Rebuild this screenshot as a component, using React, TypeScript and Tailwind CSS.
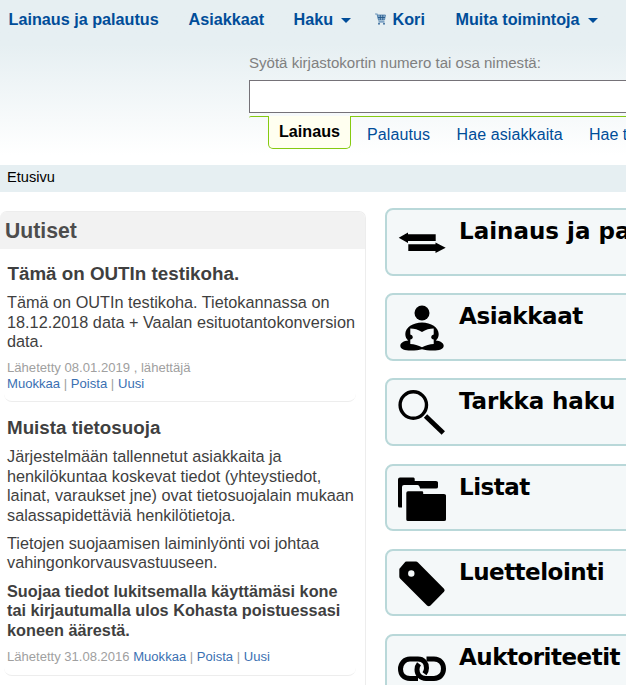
import type { ReactNode } from "react";

const sans = "font-['Liberation_Sans',Arial,sans-serif]";

function Caret() {
  return (
    <svg className="ml-2 mt-[3px] h-[5px] w-[10px]" viewBox="0 0 10 5">
      <path d="M0 0h10L5 5z" fill="#004d99" />
    </svg>
  );
}

function CartIcon() {
  return (
    <svg className="-mt-px mr-[7px] h-3 w-[11px]" viewBox="0 0 11 12">
      <path d="M0 1h2l2 6.500" fill="none" stroke="#6f97bb" strokeWidth="1.200" />
      <path d="M2.500 2h8L9.500 7H3.500z" fill="#8fb0cd" stroke="#4b7dab" strokeWidth=".8" />
      <path d="M3 4.500h7M5.300 2v5M7.800 2v5" stroke="#24598b" strokeWidth=".9" />
      <path d="M3.500 8.800h6" stroke="#7fa3c4" strokeWidth="1.800" />
      <circle cx="4" cy="10.700" r="1" fill="#40719f" />
      <circle cx="9" cy="10.700" r="1" fill="#40719f" />
    </svg>
  );
}

const icons: ReactNode[] = [
  <g key="a">
    <path d="M.7 18.700L10 13.400v1.900h27.700V22H10v2z" />
    <path d="M47.700 28.700L37.500 34v-2H10.300v-6.700h27.200v-1.900z" />
  </g>,
  <g key="p">
    <circle cx="24" cy="9" r="7.500" />
    <path d="M24 18.500c9 0 16.700 5 16.700 11.500 0 3-1 5-3 6.500 4.500.3 8 2.300 8 5.300 0 3.500-4.500 4.700-10.500 4.700-4.500 0-8.500-.4-11.200-1.200-2.700.8-6.700 1.200-11.200 1.200-6 0-10.500-1.200-10.500-4.700 0-3 3.500-5 8-5.300-2-1.500-3-3.500-3-6.500C7.300 23.500 15 18.500 24 18.500z" />
    <path className="fill-[#f4f8f9]" d="M12.300 24.500c4 0 8 1 11.700 3.500 3.700-2.500 7.700-3.500 11.700-3.500v6c-1.700.5-2.500 1.600-2.500 2.700s1 2.200 2.500 2.300V40c-4 .3-8 1.200-11.700 3.200-3.700-2-7.700-2.900-11.700-3.200v-4.500c1.500-.1 2.500-1.200 2.500-2.300s-.8-2.200-2.500-2.700z" />
  </g>,
  <g key="s" fill="none" stroke="#000">
    <circle cx="15.300" cy="16" r="13.200" strokeWidth="3.400" />
    <path d="M27.500 27L45.300 44" strokeWidth="4.800" />
  </g>,
  <g key="f">
    <path d="M0 4.500q0-2 2-2h13.500q1.200 0 1.200 1.500v2H38q2 0 2 1.500v4.500q0 1.500-2 1.500H22q-.5-3.500-2.500-3.500H6q-2 0-2 2v20.500H1.500Q0 32.500 0 31z" />
    <path d="M8.300 18q0-1.700 1.700-1.700h14q1.200 0 1.200 1.200V19H46q2 0 2 1.500v24q0 1.500-2 1.500H10q-1.700 0-1.700-1.500z" />
  </g>,
  <path key="t" fillRule="evenodd" d="M8.500 1.500h9.500q1 0 2 1L46 28.800q1.400 1.500 0 3L32.500 45.500q-1.800 1.500-3.500 0L2.300 18.800q-1-1-1-2.300V9.600q0-1 1-1.800l4.200-5q.8-1.200 2-1.300zM13.300 10.300a3.200 3.200 0 1 0 0 6.400 3.200 3.200 0 0 0 0-6.400z" />,
  <g key="l" fill="none" stroke="#000" strokeWidth="5">
    <path d="M20 33.500H12C6 33.500 2.500 29.500 2.500 24S6.500 14 12 14h8c5.500 0 8.500 4 8.500 9 0 2.500-.8 4.200-2 5.800" />
    <path d="M28.500 14H36c6 0 9.500 4.500 9.500 9.700S42 33.500 36 33.500h-8c-5.500 0-9-4-9-9 0-2.500.8-4.200 2-5.700" />
  </g>,
];

const modules = [
  { label: "Lainaus ja palautus", spacing: "tracking-[0px]" },
  { label: "Asiakkaat", spacing: "tracking-[-0.4px]" },
  { label: "Tarkka haku", spacing: "tracking-[-0.1px]" },
  { label: "Listat", spacing: "tracking-[-0.5px]" },
  { label: "Luettelointi", spacing: "tracking-[-0.5px]" },
  { label: "Auktoriteetit", spacing: "tracking-[-0.5px]" },
];

function Actions() {
  return (
    <>
      <a className="text-[#3a70b2]">Muokkaa</a> | <a className="text-[#3a70b2]">Poista</a> |{" "}
      <a className="text-[#3a70b2]">Uusi</a>
    </>
  );
}

export default function App() {
  return (
    <div className={`h-[685px] w-[626px] overflow-hidden bg-white ${sans}`}>
      <header className="h-[165px] bg-linear-to-b from-[#e6eff2] from-[27%] to-white to-[94%]">
        <nav className="flex h-[39px] items-center whitespace-nowrap pl-[8.500px] text-[16.200px] font-bold text-[#004d99]">
          <a className="w-[180px]">Lainaus ja palautus</a>
          <a className="w-[105px]">Asiakkaat</a>
          <a className="flex w-[81px] items-center">Haku<Caret /></a>
          <a className="flex w-[81px] items-center"><CartIcon />Kori</a>
          <a className="flex items-center">Muita toimintoja<Caret /></a>
        </nav>
        <div className="ml-[249px]">
          <div className="h-[41px] whitespace-nowrap pt-[14px] text-[15.050px] leading-[20px] text-[#808080]">Syötä kirjastokortin numero tai osa nimestä:</div>
          <div className="h-[33px] w-[400px] border border-[#757278] bg-white" />
          <div className="flex pt-[3px]">
            <div className="h-[4px] w-[19px] shrink-0 rounded-tl-[2px] border-t border-[#85ca11]" />
            <div className="h-[33px] w-[83px] shrink-0 rounded-b-[5px] border border-t-0 border-[#85ca11] bg-[#fffff0] text-center text-[16.150px] font-bold leading-[31px] text-black">Lainaus</div>
            <div className="flex h-[34px] w-[400px] shrink-0 whitespace-nowrap border-t border-[#85ca11] pl-4 text-[16px] leading-[35px] text-[#004d99]">
              <a className="w-[89.500px] shrink-0 tracking-[0.100px]">Palautus</a>
              <a className="w-[132.500px] shrink-0 tracking-[0.100px]">Hae asiakkaita</a>
              <a>Hae tietueita</a>
            </div>
          </div>
        </div>
      </header>
      <div className="h-[27px] bg-[#e6eff2] pl-[7px] text-[14.600px] leading-[24px] text-black">Etusivu</div>
      <main className="flex pt-4">
        <aside className="mt-[3px] h-[480px] w-[366px] shrink-0 rounded-tr-[7px] border-r border-t border-[#ededed] rounded-tl-[7px] text-[16px] leading-[19.600px] text-[#3f3f3f]">
          <h1 className="h-[37px] rounded-t-[6px] bg-[#f2f2f2] pl-[5px] text-[21.200px] font-bold leading-[38px] text-[#4d4d4d]">Uutiset</h1>
          <article className="ml-1 mr-[9px] h-[153px] rounded-b-lg border-b border-[#ededed] pl-[3px] pt-[14px]">
            <h2 className="whitespace-nowrap pl-[0.500px] text-[18.800px] font-bold leading-[22px]">Tämä on OUTIn testikoha.</h2>
            <p className="mt-[8px] whitespace-nowrap text-[16.260px]">Tämä on OUTIn testikoha. Tietokannassa on<br />18.12.2018 data + Vaalan esituotantokonversion<br />data.</p>
            <p className="mt-[8px] whitespace-nowrap text-[13.100px] leading-[16px] text-[#a0a0a0]">Lähetetty 08.01.2019 , lähettäjä<br /><Actions /></p>
          </article>
          <article className="ml-1 mr-[9px] h-[274px] rounded-b-lg border-b border-[#ededed] pl-[3px] pt-[15px]">
            <h2 className="text-[18.800px] font-bold leading-[22px]">Muista tietosuoja</h2>
            <p className="mt-[8px] whitespace-nowrap text-[16.260px]">Järjestelmään tallennetut asiakkaita ja<br />henkilökuntaa koskevat tiedot (yhteystiedot,<br />lainat, varaukset jne) ovat tietosuojalain mukaan<br />salassapidettäviä henkilötietoja.</p>
            <p className="mt-[8.500px] whitespace-nowrap text-[16.260px]">Tietojen suojaamisen laiminlyönti voi johtaa<br />vahingonkorvausvastuuseen.</p>
            <p className="mt-[8.500px] whitespace-nowrap text-[16.260px] font-bold">Suojaa tiedot lukitsemalla käyttämäsi kone<br />tai kirjautumalla ulos Kohasta poistuessasi<br />koneen äärestä.</p>
            <p className="mt-[9px] text-[13.050px] leading-[16px] text-[#a0a0a0]">Lähetetty 31.08.2016 <Actions /></p>
          </article>
        </aside>
        <section className="ml-[19px] flex shrink-0 flex-col gap-[17.600px]">
          {modules.map((item, index) => (
            <a key={item.label} className="flex h-[67.600px] w-[300px] rounded-[8px] border-2 border-[#b9d8d9] bg-[#f4f8f9] pl-[11px] pt-[9px] text-black">
              <svg className="h-12 w-12 shrink-0" viewBox="0 0 48 48">{icons[index]}</svg>
              <span className={`-mt-[2px] ml-[13px] whitespace-nowrap font-['DejaVu_Sans',Verdana,sans-serif] text-[23px] font-bold leading-[28px] ${item.spacing}`}>{item.label}</span>
            </a>
          ))}
        </section>
      </main>
    </div>
  );
}
